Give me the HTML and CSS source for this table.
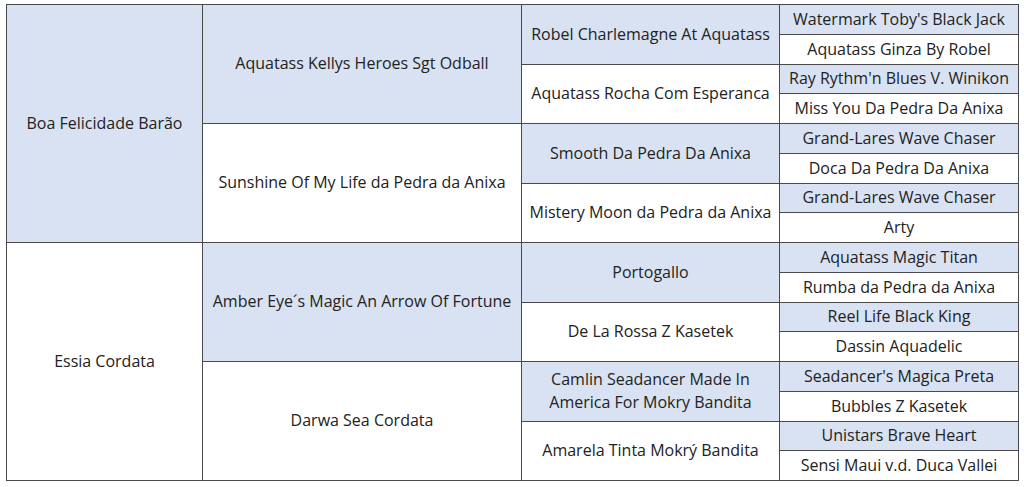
FILE: index.html
```html
<!DOCTYPE html>
<html lang="pt">
<head>
<meta charset="utf-8">
<title>Pedigree</title>
<link rel="stylesheet" href="styles.css">
</head>
<body>
<div class="pedigree">
  <div class="cell g1 sire" style="grid-row: 1 / span 8">Boa Felicidade Barão</div>
  <div class="cell g2 sire" style="grid-row: 1 / span 4">Aquatass Kellys Heroes Sgt Odball</div>
  <div class="cell g3 sire" style="grid-row: 1 / span 2">Robel Charlemagne At Aquatass</div>
  <div class="cell g4 sire" style="grid-row: 1">Watermark Toby's Black Jack</div>
  <div class="cell g4 dam" style="grid-row: 2">Aquatass Ginza By Robel</div>
  <div class="cell g3 dam" style="grid-row: 3 / span 2">Aquatass Rocha Com Esperanca</div>
  <div class="cell g4 sire" style="grid-row: 3">Ray Rythm'n Blues V. Winikon</div>
  <div class="cell g4 dam" style="grid-row: 4">Miss You Da Pedra Da Anixa</div>
  <div class="cell g2 dam" style="grid-row: 5 / span 4">Sunshine Of My Life da Pedra da Anixa</div>
  <div class="cell g3 sire" style="grid-row: 5 / span 2">Smooth Da Pedra Da Anixa</div>
  <div class="cell g4 sire" style="grid-row: 5">Grand-Lares Wave Chaser</div>
  <div class="cell g4 dam" style="grid-row: 6">Doca Da Pedra Da Anixa</div>
  <div class="cell g3 dam" style="grid-row: 7 / span 2">Mistery Moon da Pedra da Anixa</div>
  <div class="cell g4 sire" style="grid-row: 7">Grand-Lares Wave Chaser</div>
  <div class="cell g4 dam" style="grid-row: 8">Arty</div>

  <div class="cell g1 dam" style="grid-row: 9 / span 8">Essia Cordata</div>
  <div class="cell g2 sire" style="grid-row: 9 / span 4">Amber Eye´s Magic An Arrow Of Fortune</div>
  <div class="cell g3 sire" style="grid-row: 9 / span 2">Portogallo</div>
  <div class="cell g4 sire" style="grid-row: 9">Aquatass Magic Titan</div>
  <div class="cell g4 dam" style="grid-row: 10">Rumba da Pedra da Anixa</div>
  <div class="cell g3 dam" style="grid-row: 11 / span 2">De La Rossa Z Kasetek</div>
  <div class="cell g4 sire" style="grid-row: 11">Reel Life Black King</div>
  <div class="cell g4 dam" style="grid-row: 12">Dassin Aquadelic</div>
  <div class="cell g2 dam" style="grid-row: 13 / span 4">Darwa Sea Cordata</div>
  <div class="cell g3 sire two" style="grid-row: 13 / span 2">Camlin Seadancer Made In<br>America For Mokry Bandita</div>
  <div class="cell g4 sire" style="grid-row: 13">Seadancer's Magica Preta</div>
  <div class="cell g4 dam" style="grid-row: 14">Bubbles Z Kasetek</div>
  <div class="cell g3 dam" style="grid-row: 15 / span 2">Amarela Tinta Mokrý Bandita</div>
  <div class="cell g4 sire" style="grid-row: 15">Unistars Brave Heart</div>
  <div class="cell g4 dam" style="grid-row: 16">Sensi Maui v.d. Duca Vallei</div>
</div>
</body>
</html>
```

FILE: styles.css
```css
html, body {
  margin: 0;
  padding: 0;
  background: #ffffff;
}

body {
  padding: 4px 0 0 6px;
  font-family: "Open Sans", "Noto Sans", sans-serif;
  font-size: 16px;
  color: #222222;
}

.pedigree {
  box-sizing: border-box;
  width: 1013px;
  height: 477px;
  display: grid;
  grid-template-columns: 196px 319px 258px 239px;
  grid-template-rows: repeat(16, 1fr);
  border-left: 1px solid #4a4a4a;
  border-top: 1px solid #4a4a4a;
}

.cell {
  display: flex;
  align-items: center;
  justify-content: center;
  text-align: center;
  border-right: 1px solid #4a4a4a;
  border-bottom: 1px solid #4a4a4a;
  padding: 0 2px;
  line-height: 1.2;
  white-space: nowrap;
}

.g1 { grid-column: 1; }
.g2 { grid-column: 2; }
.g3 { grid-column: 3; }
.g4 { grid-column: 4; }

.sire { background: #d9e2f3; }
.dam { background: #ffffff; }

.two { line-height: 23px; }
```
